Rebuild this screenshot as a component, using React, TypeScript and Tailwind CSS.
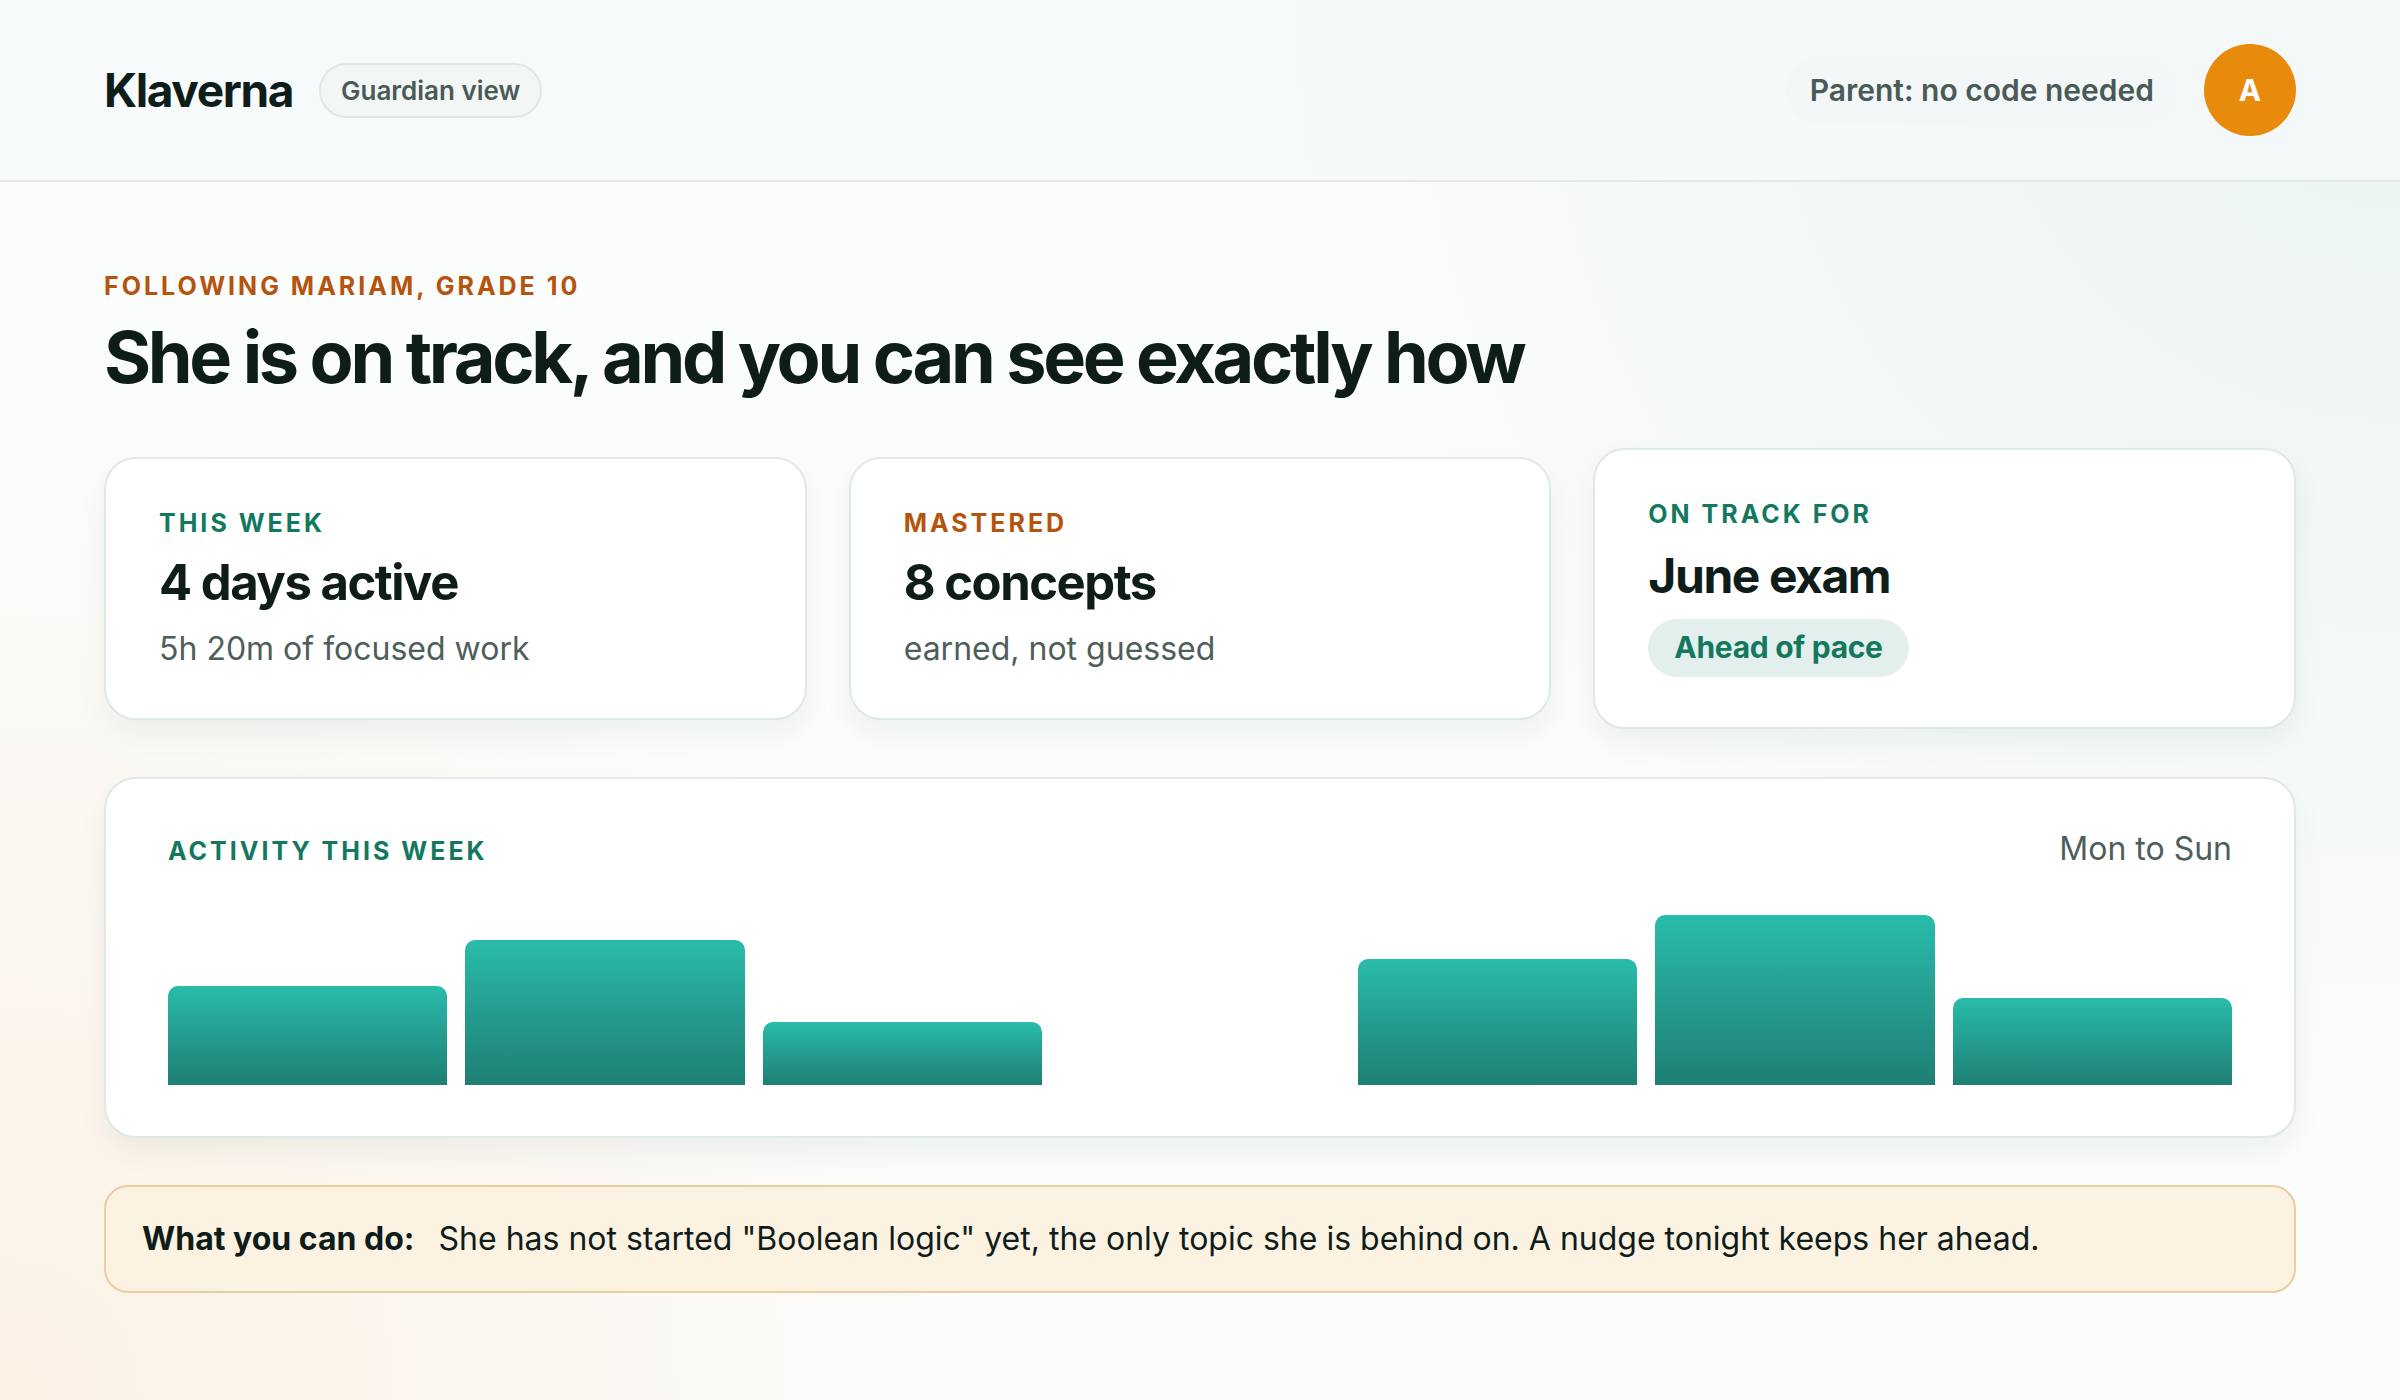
import React from 'react';

const BARS = [58, 85, 37, 0, 74, 100, 51];

const STATS = [
  { label: 'THIS WEEK', tone: 'text-[#14785f]', value: '4 days active', sub: '5h 20m of focused work' },
  { label: 'MASTERED', tone: 'text-[#b4540e]', value: '8 concepts', sub: 'earned, not guessed' },
];

export default function App() {
  return (
    <div className="min-h-screen bg-[#fbfcfc] bg-[radial-gradient(circle_at_100%_0%,#eaf3f2_0%,transparent_40%),radial-gradient(circle_at_0%_100%,#fcf2e4_0%,transparent_35%)] font-['Inter',sans-serif] text-[#0f1d1a]">
      {/* Top bar */}
      <header className="flex items-center justify-between border-b-2 border-[#e2eae8] bg-[#f5f9f9]/80 px-[104px] py-[44px]">
        <div className="flex items-center gap-[26px]">
          <span className="text-[46px] font-bold tracking-[-0.03em]">Klaverna</span>
          <span className="rounded-full border-2 border-[#dfe8e6] bg-[#f2f6f5] px-[20px] py-[6px] text-[26px] font-semibold text-[#4a5a57]">
            Guardian view
          </span>
        </div>
        <div className="flex items-center gap-[26px]">
          <span className="rounded-full bg-[#f3f7f7] px-[24px] py-[12px] text-[30px] font-semibold text-[#4a5a57]">
            Parent: no code needed
          </span>
          <div className="flex h-[92px] w-[92px] items-center justify-center rounded-full bg-[#e88a0c] text-[30px] font-bold text-white">
            A
          </div>
        </div>
      </header>

      <main className="px-[104px] pt-[86px] pb-[100px]">
        <p className="text-[25px] font-bold tracking-[0.12em] text-[#b4540e]">FOLLOWING MARIAM, GRADE 10</p>
        <h1 className="mt-[11px] text-[72px] font-bold leading-[1.1] tracking-[-0.046em]">
          She is on track, and you can see exactly how
        </h1>

        {/* Stat cards */}
        <div className="mt-[52px] grid grid-cols-3 items-center gap-[42px]">
          {STATS.map((s) => (
            <div
              key={s.label}
              className="flex flex-col gap-[12px] rounded-[32px] border-2 border-[#dfe9e6] bg-white px-[53px] pt-[46px] pb-[45px] shadow-[0_14px_30px_rgba(20,70,60,0.06)]"
            >
              <span className={`text-[25px] font-bold leading-[1.5] tracking-[0.12em] ${s.tone}`}>{s.label}</span>
              <span className="text-[49px] font-bold leading-[1.2] tracking-[-0.03em]">{s.value}</span>
              <span className="text-[32px] leading-[1.5] text-[#4e5e5b]">{s.sub}</span>
            </div>
          ))}
          <div className="flex flex-col items-start gap-[14px] rounded-[32px] border-2 border-[#dfe9e6] bg-white px-[53px] pt-[46px] pb-[50px] shadow-[0_14px_30px_rgba(20,70,60,0.06)]">
            <span className="text-[25px] font-bold leading-[1.5] tracking-[0.12em] text-[#14785f]">ON TRACK FOR</span>
            <span className="text-[48px] font-bold leading-[1.2] tracking-[-0.03em]">June exam</span>
            <span className="flex h-[58px] items-center rounded-full bg-[#e3efec] px-[26px] text-[30px] font-bold tracking-[-0.01em] text-[#14785f]">
              Ahead of pace
            </span>
          </div>
        </div>

        {/* Activity */}
        <section className="mt-[48px] rounded-[32px] border-2 border-[#dfe9e6] bg-white px-[62px] pt-[46px] pb-[51px] shadow-[0_14px_30px_rgba(20,70,60,0.06)]">
          <div className="flex items-baseline justify-between">
            <span className="text-[25px] font-bold tracking-[0.12em] text-[#14785f]">ACTIVITY THIS WEEK</span>
            <span className="text-[32px] text-[#4e5e5b]">Mon to Sun</span>
          </div>
          <div className="mt-[42px] flex h-[170px] items-end gap-[18px]">
            {BARS.map((h, i) => (
              <div
                key={i}
                className="flex-1 rounded-t-[10px] bg-gradient-to-b from-[#29bcaa] to-[#1f7f74]"
                style={{ height: `${h}%` }}
              />
            ))}
          </div>
        </section>

        {/* Advice */}
        <div className="mt-[47px] flex items-center gap-[24px] rounded-[24px] border-2 border-[#e6d09f] bg-[#fcf2e2] px-[36px] py-[28px] text-[32px]">
          <span className="font-bold">What you can do:</span>
          <span>She has not started "Boolean logic" yet, the only topic she is behind on. A nudge tonight keeps her ahead.</span>
        </div>
      </main>
    </div>
  );
}
